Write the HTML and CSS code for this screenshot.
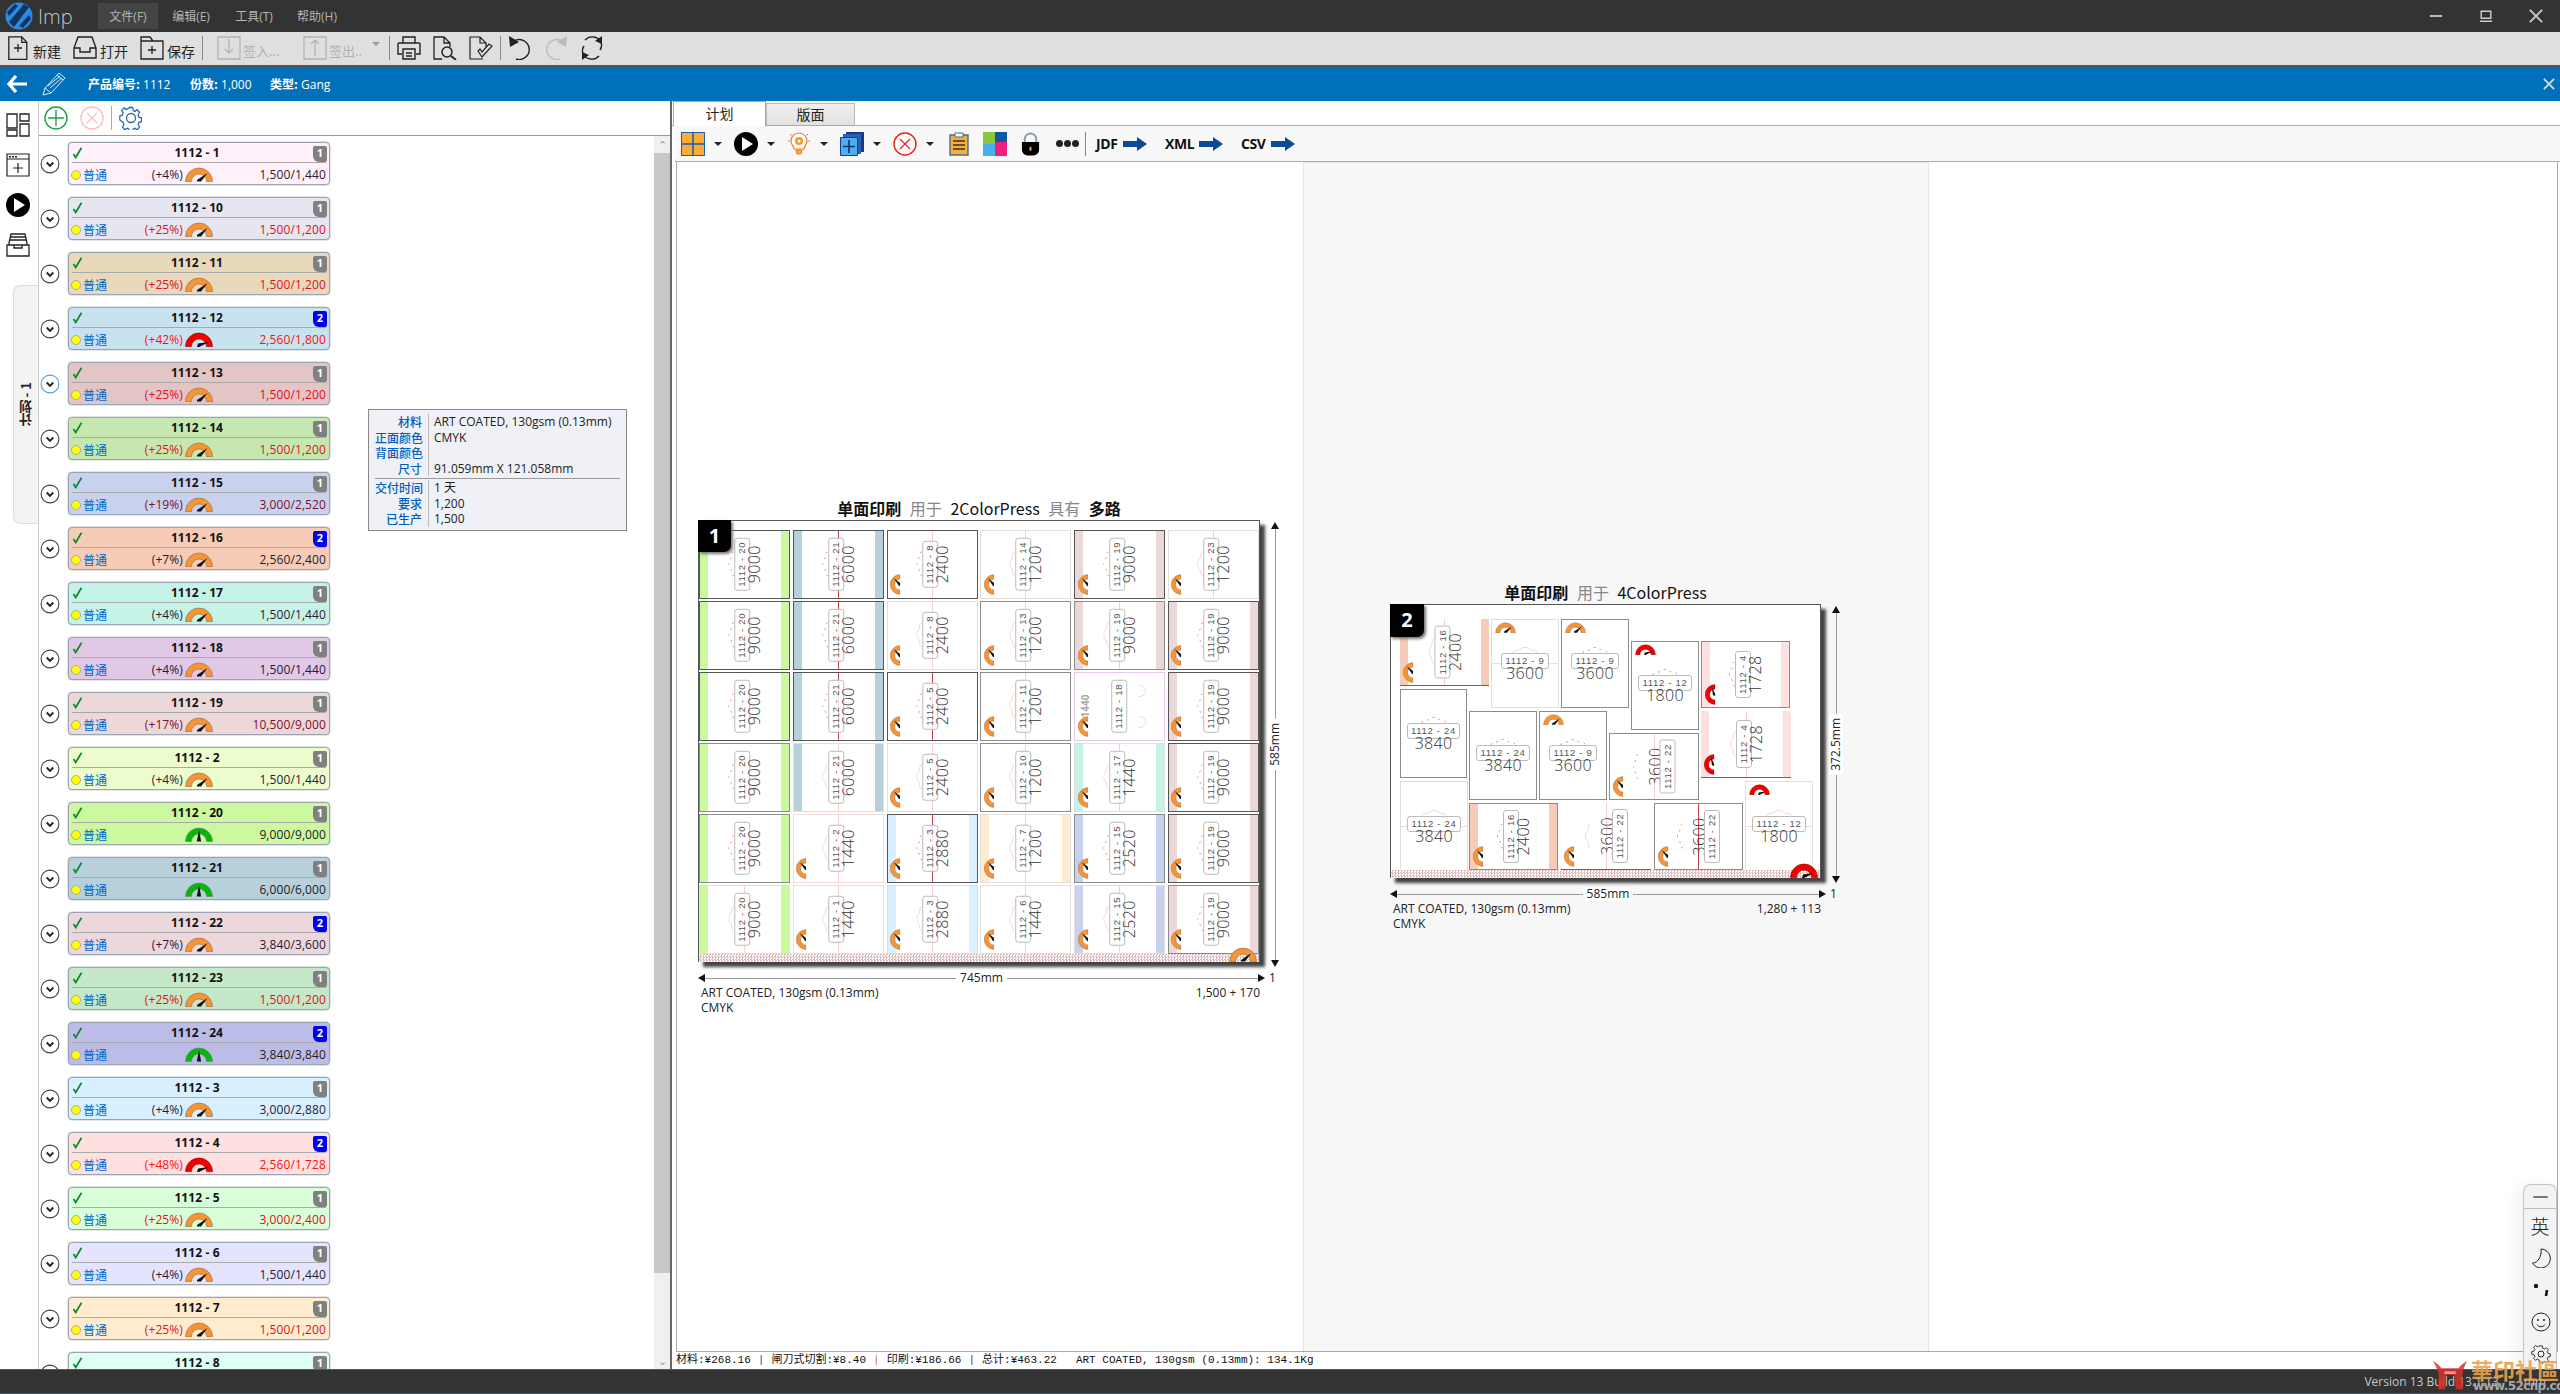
FILE: index.html
```html
<!DOCTYPE html>
<html lang="zh">
<head>
<meta charset="utf-8">
<title>Imp</title>
<link rel="stylesheet" href="styles.css">
</head>
<body>
<svg class="defs" aria-hidden="true">
<symbol id="go" viewBox="0 0 28 15"><path d="M.5 14.5a13.5 13.5 0 0 1 27 0h-6a7.5 7.5 0 0 0-15 0z" fill="#f79433" stroke="#8a6a50" stroke-width=".6"/><path d="M12 13l10.5-7-6.500 8.500h-4z" fill="#111"/></symbol>
<symbol id="gr" viewBox="0 0 28 15"><path d="M.5 14.500a13.500 13.500 0 0 1 27 0h-6a7.500 7.500 0 0 0-15 0z" fill="#f00000" stroke="#800" stroke-width=".6"/><path d="M13 11.500l11-1.500-10 5h-2z" fill="#111"/></symbol>
<symbol id="gg" viewBox="0 0 28 15"><path d="M.5 14.500a13.500 13.500 0 0 1 27 0h-6a7.500 7.500 0 0 0-15 0z" fill="#0ab40a" stroke="#686" stroke-width=".6"/><path d="M14 3l2.200 11.500h-4.400z" fill="#111"/></symbol>
<symbol id="ck" viewBox="0 0 12 12"><path d="M1.500 7l2.200 3.500L9.500 .8" fill="none" stroke="#0a8a28" stroke-width="1.700"/></symbol>
<symbol id="ch" viewBox="0 0 20 20"><circle cx="10" cy="10" r="8.900" fill="#fff" stroke="currentColor" stroke-width="1.100"/><path d="M6.700 8.500l3.300 3.300 3.300-3.300" fill="none" stroke="#222" stroke-width="1.900"/></symbol>
<symbol id="dd" viewBox="0 0 34 8"><path d="M1 8C1 4 6 5 9 4s3-3.500 8-3.500 5 2.500 8 3.500 8 0 8 4" fill="none" stroke="#e2404a" stroke-width=".9" stroke-dasharray="2.500 6"/></symbol>
<symbol id="dp" viewBox="0 0 34 8"><path d="M1 8C1 4 6 5 9 4s3-3.500 8-3.500 5 2.500 8 3.500 8 0 8 4" fill="none" stroke="#f3c0c4" stroke-width=".9"/></symbol>
<symbol id="ar" viewBox="0 0 24 14"><path d="M0 4h14V0l10 7-10 7v-4H0z" fill="#0b4a9a"/></symbol>
</svg>

<div class="app">
  <header class="titlebar">
    <svg class="logo" viewBox="0 0 30 30"><circle cx="15" cy="15" r="13.500" fill="#2c8ae2"/><path d="M5 21L20 3l5 3L10 26zM3 11l8-8 3 2-9 10z" fill="#14335e"/><path d="M15 25l10-11 2 4-8 9z" fill="#14335e"/></svg>
    <span class="appname">Imp</span>
    <nav class="menu">
      <span class="menu-item active">文件(F)</span>
      <span class="menu-item">编辑(E)</span>
      <span class="menu-item">工具(T)</span>
      <span class="menu-item">帮助(H)</span>
    </nav>
    <div class="winctl">
      <svg viewBox="0 0 16 16"><path d="M1 8h14" stroke="#ccc" stroke-width="2"/></svg>
      <svg viewBox="0 0 16 16"><path d="M2.500 2.500h11v8h-11zM1 14h14" fill="none" stroke="#ccc" stroke-width="1.600"/></svg>
      <svg viewBox="0 0 16 16"><path d="M1 1l14 14M15 1L1 15" stroke="#ccc" stroke-width="2.200"/></svg>
    </div>
  </header>

  <div class="toolbar">
    <button class="tb t-new"><svg class="ti" viewBox="0 0 24 24"><path d="M.8.8h13l5 5.500v17H.8zM13.800.8v5.500h5M10 8v8M6 12h8" fill="none" stroke="#222" stroke-width="1.300"/></svg><span>新建</span></button>
    <button class="tb"><svg class="ti" viewBox="0 0 24 24"><path d="M5 1h14l4 11v10H1V12zM1 12h6v4h10v-4h6" fill="none" stroke="#222" stroke-width="1.400"/></svg><span>打开</span></button>
    <button class="tb"><svg class="ti" viewBox="0 0 24 24"><path d="M1 1h9l3 4h10v18H1zM1 5h12M12 10v8M8 14h8" fill="none" stroke="#222" stroke-width="1.300"/></svg><span>保存</span></button>
    <i class="sep s-first"></i>
    <button class="tb off"><svg class="ti" viewBox="0 0 24 24"><path d="M1 1h22v22H1zM12 3v14M8 13l4 4 4-4" fill="none" stroke="#b4b4b4" stroke-width="1.300"/></svg><span>签入...</span></button>
    <button class="tb off wide"><svg class="ti" viewBox="0 0 24 24"><path d="M1 1h22v22H1zM12 20V4M8 8l4-4 4 4" fill="none" stroke="#b4b4b4" stroke-width="1.300"/></svg><span>签出..</span><em class="drop gray"></em></button>
    <i class="sep"></i>
    <button class="tb icon"><svg class="ti" viewBox="0 0 24 24"><path d="M6 7V1h12v6M5 18H1V8a1 1 0 0 1 1-1h20a1 1 0 0 1 1 1v10h-4M6 13h12v10H6zM9 17h6M9 20h6" fill="none" stroke="#222" stroke-width="1.400"/></svg></button>
    <button class="tb icon"><svg class="ti" viewBox="0 0 24 24"><path d="M9 23H1V1h10l6 6v4M11 1v6h6" fill="none" stroke="#222" stroke-width="1.300"/><circle cx="14" cy="16" r="5" fill="none" stroke="#222" stroke-width="1.500"/><path d="M18 20l5 4" stroke="#222" stroke-width="1.800"/></svg></button>
    <button class="tb icon"><svg class="ti" viewBox="0 0 24 24"><path d="M14 23H1V1h10l6 6v4M11 1v6h6M9 15l4 6 10-11-3-2-7 8-2-3z" fill="none" stroke="#222" stroke-width="1.200"/></svg></button>
    <i class="sep"></i>
    <button class="tb icon"><svg class="ti" viewBox="0 0 24 24"><path d="M6 5a10 10 0 1 1 2 18" fill="none" stroke="#222" stroke-width="1.400"/><path d="M1 0l1 11 9-5z" fill="#222"/></svg></button>
    <button class="tb icon"><svg class="ti" viewBox="0 0 24 24"><path d="M18 5a10 10 0 1 0-2 18" fill="none" stroke="#bbb" stroke-width="1.400"/><path d="M23 0l-1 11-9-5z" fill="#bbb"/></svg></button>
    <button class="tb icon"><svg class="ti" viewBox="0 0 24 24"><path d="M21 6a10 10 0 0 0-16-2M3 18a10 10 0 0 0 16 2M20 14a9 9 0 0 0 1-8M4 10a9 9 0 0 0-1 8" fill="none" stroke="#222" stroke-width="1.400"/><path d="M22 0v8l-7-3zM2 24v-8l7 3z" fill="#222"/></svg></button>
  </div>

  <div class="bluebar">
    <svg class="back" viewBox="0 0 20 18"><path d="M9 1L2 9l7 8M2 9h18" fill="none" stroke="#fff" stroke-width="3.200"/></svg>
    <svg class="pencil" viewBox="0 0 24 24"><path d="M1 23l2-7L17 1l6 5L9 21zM3 16l6 5M15 3l6 5M6 14L18 4M8 16L20 6" fill="none" stroke="#dfeaf5" stroke-width="1"/></svg>
    <span class="fact f1"><b>产品编号:</b> 1112</span>
    <span class="fact f2"><b>份数:</b> 1,000</span>
    <span class="fact"><b>类型:</b> Gang</span>
    <svg class="close" viewBox="0 0 14 14"><path d="M1 1l12 12M13 1L1 13" stroke="#d8dde2" stroke-width="2"/></svg>
  </div>

  <main class="main">
    <section class="left">
      <aside class="rail">
        <svg class="ri" viewBox="0 0 24 24"><path d="M1 1h10v14H1zM14 1h9v7h-9zM14 11h9v12h-9zM1 17h10v6H1z" fill="none" stroke="#222" stroke-width="1.300"/></svg>
        <svg class="ri" viewBox="0 0 24 24"><path d="M1 1h22v22H1zM1 6h22M12 10v10M7 15h10" fill="none" stroke="#222" stroke-width="1.200"/><path d="M3 3h2v1.500H3zM6 3h2v1.500H6zM9 3h2v1.500H9z" fill="#222"/></svg>
        <svg class="ri" viewBox="0 0 24 24"><circle cx="12" cy="12" r="12" fill="#000"/><path d="M8 5l11 7-11 7z" fill="#fff"/></svg>
        <svg class="ri" viewBox="0 0 24 24"><path d="M5 1h14l2 9v2H3v-2zM5 4h14M4 7h16M1 12h7v3h8v-3h7v11H1z" fill="none" stroke="#222" stroke-width="1.300"/></svg>
        <div class="railtab"><span>计划 - 1</span></div>
      </aside>
      <div class="listcol">
        <div class="subbar">
          <svg class="si" viewBox="0 0 24 24"><circle cx="12" cy="12" r="11" fill="none" stroke="#1ea24c" stroke-width="1.400"/><path d="M12 4v16M4 12h16" stroke="#1ea24c" stroke-width="1.400"/></svg>
          <svg class="si" viewBox="0 0 24 24"><circle cx="12" cy="12" r="11" fill="none" stroke="#ffbcbc" stroke-width="1.400"/><path d="M7 7l10 10M17 7L7 17" stroke="#ffbcbc" stroke-width="1.300"/></svg>
          <i class="sep tall"></i>
          <svg class="si" viewBox="0 0 24 24"><path d="M10 1h4l.8 3.200 2.200.9 2.800-1.700 2.800 2.800-1.700 2.800.9 2.200 3.200.8v4l-3.200.8-.9 2.200 1.700 2.800-2.800 2.800-2.800-1.700-2.200.9-.8 3.200h-4l-.8-3.200-2.200-.9-2.800 1.700-2.800-2.800 1.700-2.800-.9-2.200L-2 14v-4l3.200-.8.9-2.200L.4 4.200l2.800-2.800L6 3.100l2.200-.9z" transform="translate(2.400 .5) scale(.8 .95)" fill="none" stroke="#2a68b0" stroke-width="1.500"/><circle cx="12" cy="12" r="4.500" fill="none" stroke="#2a68b0" stroke-width="1.300"/></svg>
        </div>
        <div class="listwrap">
          <div class="list">
            <div class="row"><svg class="chev"><use href="#ch"/></svg><div class="card c1 lv1"><svg class="check"><use href="#ck"/></svg><div class="ct">1112 - 1</div><span class="badge">1</span><div class="cb"><i class="dot"></i><span class="tag">普通</span><span class="pct">(+4%)</span><svg class="gauge"><use href="#go"/></svg><span class="val">1,500/1,440</span></div></div></div>
            <div class="row"><svg class="chev"><use href="#ch"/></svg><div class="card c10 lv3"><svg class="check"><use href="#ck"/></svg><div class="ct">1112 - 10</div><span class="badge">1</span><div class="cb"><i class="dot"></i><span class="tag">普通</span><span class="pct">(+25%)</span><svg class="gauge"><use href="#go"/></svg><span class="val">1,500/1,200</span></div></div></div>
            <div class="row"><svg class="chev"><use href="#ch"/></svg><div class="card c11 lv3"><svg class="check"><use href="#ck"/></svg><div class="ct">1112 - 11</div><span class="badge">1</span><div class="cb"><i class="dot"></i><span class="tag">普通</span><span class="pct">(+25%)</span><svg class="gauge"><use href="#go"/></svg><span class="val">1,500/1,200</span></div></div></div>
            <div class="row"><svg class="chev"><use href="#ch"/></svg><div class="card c12 lv4"><svg class="check"><use href="#ck"/></svg><div class="ct">1112 - 12</div><span class="badge two">2</span><div class="cb"><i class="dot"></i><span class="tag">普通</span><span class="pct">(+42%)</span><svg class="gauge"><use href="#gr"/></svg><span class="val">2,560/1,800</span></div></div></div>
            <div class="row"><svg class="chev hot"><use href="#ch"/></svg><div class="card c13 lv3"><svg class="check"><use href="#ck"/></svg><div class="ct">1112 - 13</div><span class="badge">1</span><div class="cb"><i class="dot"></i><span class="tag">普通</span><span class="pct">(+25%)</span><svg class="gauge"><use href="#go"/></svg><span class="val">1,500/1,200</span></div></div></div>
            <div class="row"><svg class="chev"><use href="#ch"/></svg><div class="card c14 lv3"><svg class="check"><use href="#ck"/></svg><div class="ct">1112 - 14</div><span class="badge">1</span><div class="cb"><i class="dot"></i><span class="tag">普通</span><span class="pct">(+25%)</span><svg class="gauge"><use href="#go"/></svg><span class="val">1,500/1,200</span></div></div></div>
            <div class="row"><svg class="chev"><use href="#ch"/></svg><div class="card c15 lv2"><svg class="check"><use href="#ck"/></svg><div class="ct">1112 - 15</div><span class="badge">1</span><div class="cb"><i class="dot"></i><span class="tag">普通</span><span class="pct">(+19%)</span><svg class="gauge"><use href="#go"/></svg><span class="val">3,000/2,520</span></div></div></div>
            <div class="row"><svg class="chev"><use href="#ch"/></svg><div class="card c16 lv1"><svg class="check"><use href="#ck"/></svg><div class="ct">1112 - 16</div><span class="badge two">2</span><div class="cb"><i class="dot"></i><span class="tag">普通</span><span class="pct">(+7%)</span><svg class="gauge"><use href="#go"/></svg><span class="val">2,560/2,400</span></div></div></div>
            <div class="row"><svg class="chev"><use href="#ch"/></svg><div class="card c17 lv1"><svg class="check"><use href="#ck"/></svg><div class="ct">1112 - 17</div><span class="badge">1</span><div class="cb"><i class="dot"></i><span class="tag">普通</span><span class="pct">(+4%)</span><svg class="gauge"><use href="#go"/></svg><span class="val">1,500/1,440</span></div></div></div>
            <div class="row"><svg class="chev"><use href="#ch"/></svg><div class="card c18 lv1"><svg class="check"><use href="#ck"/></svg><div class="ct">1112 - 18</div><span class="badge">1</span><div class="cb"><i class="dot"></i><span class="tag">普通</span><span class="pct">(+4%)</span><svg class="gauge"><use href="#go"/></svg><span class="val">1,500/1,440</span></div></div></div>
            <div class="row"><svg class="chev"><use href="#ch"/></svg><div class="card c19 lv2"><svg class="check"><use href="#ck"/></svg><div class="ct">1112 - 19</div><span class="badge">1</span><div class="cb"><i class="dot"></i><span class="tag">普通</span><span class="pct">(+17%)</span><svg class="gauge"><use href="#go"/></svg><span class="val">10,500/9,000</span></div></div></div>
            <div class="row"><svg class="chev"><use href="#ch"/></svg><div class="card c2 lv1"><svg class="check"><use href="#ck"/></svg><div class="ct">1112 - 2</div><span class="badge">1</span><div class="cb"><i class="dot"></i><span class="tag">普通</span><span class="pct">(+4%)</span><svg class="gauge"><use href="#go"/></svg><span class="val">1,500/1,440</span></div></div></div>
            <div class="row"><svg class="chev"><use href="#ch"/></svg><div class="card c20 lv0"><svg class="check"><use href="#ck"/></svg><div class="ct">1112 - 20</div><span class="badge">1</span><div class="cb"><i class="dot"></i><span class="tag">普通</span><span class="pct"></span><svg class="gauge"><use href="#gg"/></svg><span class="val">9,000/9,000</span></div></div></div>
            <div class="row"><svg class="chev"><use href="#ch"/></svg><div class="card c21 lv0"><svg class="check"><use href="#ck"/></svg><div class="ct">1112 - 21</div><span class="badge">1</span><div class="cb"><i class="dot"></i><span class="tag">普通</span><span class="pct"></span><svg class="gauge"><use href="#gg"/></svg><span class="val">6,000/6,000</span></div></div></div>
            <div class="row"><svg class="chev"><use href="#ch"/></svg><div class="card c22 lv1"><svg class="check"><use href="#ck"/></svg><div class="ct">1112 - 22</div><span class="badge two">2</span><div class="cb"><i class="dot"></i><span class="tag">普通</span><span class="pct">(+7%)</span><svg class="gauge"><use href="#go"/></svg><span class="val">3,840/3,600</span></div></div></div>
            <div class="row"><svg class="chev"><use href="#ch"/></svg><div class="card c23 lv3"><svg class="check"><use href="#ck"/></svg><div class="ct">1112 - 23</div><span class="badge">1</span><div class="cb"><i class="dot"></i><span class="tag">普通</span><span class="pct">(+25%)</span><svg class="gauge"><use href="#go"/></svg><span class="val">1,500/1,200</span></div></div></div>
            <div class="row"><svg class="chev"><use href="#ch"/></svg><div class="card c24 lv0"><svg class="check"><use href="#ck"/></svg><div class="ct">1112 - 24</div><span class="badge two">2</span><div class="cb"><i class="dot"></i><span class="tag">普通</span><span class="pct"></span><svg class="gauge"><use href="#gg"/></svg><span class="val">3,840/3,840</span></div></div></div>
            <div class="row"><svg class="chev"><use href="#ch"/></svg><div class="card c3 lv1"><svg class="check"><use href="#ck"/></svg><div class="ct">1112 - 3</div><span class="badge">1</span><div class="cb"><i class="dot"></i><span class="tag">普通</span><span class="pct">(+4%)</span><svg class="gauge"><use href="#go"/></svg><span class="val">3,000/2,880</span></div></div></div>
            <div class="row"><svg class="chev"><use href="#ch"/></svg><div class="card c4 lv4"><svg class="check"><use href="#ck"/></svg><div class="ct">1112 - 4</div><span class="badge two">2</span><div class="cb"><i class="dot"></i><span class="tag">普通</span><span class="pct">(+48%)</span><svg class="gauge"><use href="#gr"/></svg><span class="val">2,560/1,728</span></div></div></div>
            <div class="row"><svg class="chev"><use href="#ch"/></svg><div class="card c5 lv3"><svg class="check"><use href="#ck"/></svg><div class="ct">1112 - 5</div><span class="badge">1</span><div class="cb"><i class="dot"></i><span class="tag">普通</span><span class="pct">(+25%)</span><svg class="gauge"><use href="#go"/></svg><span class="val">3,000/2,400</span></div></div></div>
            <div class="row"><svg class="chev"><use href="#ch"/></svg><div class="card c6 lv1"><svg class="check"><use href="#ck"/></svg><div class="ct">1112 - 6</div><span class="badge">1</span><div class="cb"><i class="dot"></i><span class="tag">普通</span><span class="pct">(+4%)</span><svg class="gauge"><use href="#go"/></svg><span class="val">1,500/1,440</span></div></div></div>
            <div class="row"><svg class="chev"><use href="#ch"/></svg><div class="card c7 lv3"><svg class="check"><use href="#ck"/></svg><div class="ct">1112 - 7</div><span class="badge">1</span><div class="cb"><i class="dot"></i><span class="tag">普通</span><span class="pct">(+25%)</span><svg class="gauge"><use href="#go"/></svg><span class="val">1,500/1,200</span></div></div></div>
            <div class="row"><svg class="chev"><use href="#ch"/></svg><div class="card c8 lv1"><svg class="check"><use href="#ck"/></svg><div class="ct">1112 - 8</div><span class="badge">1</span><div class="cb"><i class="dot"></i><span class="tag">普通</span><span class="pct">(+4%)</span><svg class="gauge"><use href="#go"/></svg><span class="val">1,500/1,440</span></div></div></div>
          </div>
          <div class="scrollbar"><span class="sarrow">⌃</span><div class="thumb"></div><div class="strack"></div><span class="sarrow">⌄</span></div>
        </div>
      </div>
      <div class="tip">
        <div class="tipsec">
          <span class="tl">材料</span><span>ART COATED, 130gsm (0.13mm)</span>
          <span class="tl">正面颜色</span><span>CMYK</span>
          <span class="tl">背面颜色</span><span></span>
          <span class="tl">尺寸</span><span>91.059mm X 121.058mm</span>
        </div>
        <div class="tipsec second">
          <span class="tl">交付时间</span><span>1 天</span>
          <span class="tl">要求</span><span>1,200</span>
          <span class="tl">已生产</span><span>1,500</span>
        </div>
      </div>
    </section>

    <section class="right">
      <div class="tabs"><span class="tab on">计划</span><span class="tab">版面</span></div>
      <div class="rbar">
        <svg class="rb g1" viewBox="0 0 24 24"><path d="M0 0h24v24H0z" fill="#f9ae3a"/><path d="M0 12h24M12 0v24" stroke="#1c5ea8" stroke-width="1.500"/><path d="M.5.5h23v23H.5z" fill="none" stroke="#1c5ea8"/></svg><em class="drop"></em>
        <svg class="rb" viewBox="0 0 24 24"><circle cx="12" cy="12" r="12"/><path d="M8 5l11 7-11 7z" fill="#fff"/></svg><em class="drop"></em>
        <svg class="rb" viewBox="0 0 24 24"><path d="M7 17c0-3-3-4-3-8a8 8 0 0 1 16 0c0 4-3 5-3 8z" fill="#fff" stroke="#ee7a2a" stroke-width="1.200"/><path d="M9 18h6l-1 4h-4z" fill="#f9ae3a" stroke="#ee7a2a"/><circle cx="12" cy="9" r="4" fill="#f59a20"/><circle cx="12" cy="9" r="1.500" fill="#fff"/><path d="M1 9h1.500M21.500 9H23M3 2l1.500 1.500M21 2l-1.500 1.500" stroke="#ee5a2a"/></svg><em class="drop"></em>
        <svg class="rb" viewBox="0 0 24 24"><path d="M6 0h18v20h-3V3H6z" fill="#1c3a8a"/><path d="M3 2h18v20h-3V5H3z" fill="#2c5fb0"/><path d="M.5 5.500h17v18H.5z" fill="#4cb0f0" stroke="#1c3a8a"/><path d="M9 8v13M3 14.500h12" stroke="#12306e" stroke-width="1.600"/></svg><em class="drop"></em>
        <svg class="rb" viewBox="0 0 24 24"><circle cx="12" cy="12" r="11" fill="#fff" stroke="#f02020" stroke-width="1.400"/><path d="M7 7l10 10M17 7L7 17" stroke="#f02020" stroke-width="1.300"/></svg><em class="drop last"></em>
        <svg class="rb clip" viewBox="0 0 20 24"><path d="M1 3h18v20H1z" fill="#f9ae3a" stroke="#4a6a90" stroke-width="1.400"/><path d="M6 1h8v4H6z" fill="#fff" stroke="#4a6a90"/><path d="M4 9h12M4 13h12M4 17h12" stroke="#333" stroke-width="1.500"/></svg>
        <svg class="rb blocks" viewBox="0 0 24 24"><path d="M0 0h12v12H0z" fill="#8cc63f"/><path d="M12 0h12v10H12z" fill="#0b5aa8"/><path d="M12 10h12v14H12z" fill="#ee1f78"/><path d="M0 12h12v12H0z" fill="#45b0ee"/></svg>
        <svg class="rb lock" viewBox="0 0 22 24"><path d="M5 11V7a6 6 0 0 1 12 0v4" fill="none" stroke="#8a9aa8" stroke-width="2"/><path d="M2 10h18v8a6 6 0 0 1-6 6H8a6 6 0 0 1-6-6z" fill="#000"/><path d="M10 15h2v4h-2z" fill="#f9ae3a"/></svg>
        <span class="dots"><i></i><i></i><i></i></span>
        <i class="sep mid"></i>
        <span class="exp e1">JDF</span><svg class="arrow"><use href="#ar"/></svg>
        <span class="exp e2">XML</span><svg class="arrow"><use href="#ar"/></svg>
        <span class="exp e3">CSV</span><svg class="arrow"><use href="#ar"/></svg>
      </div>
      <div class="canvas">
        <div class="col col-a">
          <div class="job job-a">
            <div class="jtitle"><b>单面印刷</b> <u>用于</u> 2ColorPress <u>具有</u> <b>多路</b></div>
            <i></i>
            <div class="sheet s1">
              <span class="no">1</span>
              <div class="tile c20 st b1"><div class="mk"><svg class="die"><use href="#dd"/></svg><b>1112 - 20</b><span>9000</span></div></div>
              <div class="tile c21 st b1 lr"><div class="mk"><svg class="die"><use href="#dd"/></svg><b>1112 - 21</b><span>6000</span></div></div>
              <div class="tile b1 lp"><div class="mk"><svg class="die"><use href="#dd"/></svg><b>1112 - 8</b><span>2400</span></div><svg class="gz"><use href="#go"/></svg></div>
              <div class="tile b3 lp"><div class="mk"><svg class="die"><use href="#dp"/></svg><b>1112 - 14</b><span>1200</span></div><svg class="gz"><use href="#go"/></svg></div>
              <div class="tile c19 st b1"><div class="mk"><svg class="die"><use href="#dd"/></svg><b>1112 - 19</b><span>9000</span></div><svg class="gz"><use href="#go"/></svg></div>
              <div class="tile b3 lp"><div class="mk"><svg class="die"><use href="#dp"/></svg><b>1112 - 23</b><span>1200</span></div><svg class="gz"><use href="#go"/></svg></div>

              <div class="tile c20 st b1"><div class="mk"><svg class="die"><use href="#dd"/></svg><b>1112 - 20</b><span>9000</span></div></div>
              <div class="tile c21 st b1 lr"><div class="mk"><svg class="die"><use href="#dd"/></svg><b>1112 - 21</b><span>6000</span></div></div>
              <div class="tile b3 lp"><div class="mk"><svg class="die"><use href="#dp"/></svg><b>1112 - 8</b><span>2400</span></div><svg class="gz"><use href="#go"/></svg></div>
              <div class="tile b2 lp"><div class="mk"><svg class="die"><use href="#dp"/></svg><b>1112 - 13</b><span>1200</span></div><svg class="gz"><use href="#go"/></svg></div>
              <div class="tile c19 st b2 lp"><div class="mk"><svg class="die"><use href="#dp"/></svg><b>1112 - 19</b><span>9000</span></div><svg class="gz"><use href="#go"/></svg></div>
              <div class="tile c19 st b1"><div class="mk"><svg class="die"><use href="#dd"/></svg><b>1112 - 19</b><span>9000</span></div><svg class="gz"><use href="#go"/></svg></div>

              <div class="tile c20 st b1"><div class="mk"><svg class="die"><use href="#dd"/></svg><b>1112 - 20</b><span>9000</span></div></div>
              <div class="tile c21 st b1 lr"><div class="mk"><svg class="die"><use href="#dd"/></svg><b>1112 - 21</b><span>6000</span></div></div>
              <div class="tile b1 lr"><div class="mk"><svg class="die"><use href="#dd"/></svg><b>1112 - 5</b><span>2400</span></div><svg class="gz"><use href="#go"/></svg></div>
              <div class="tile b2 lp"><div class="mk"><svg class="die"><use href="#dp"/></svg><b>1112 - 11</b><span>1200</span></div><svg class="gz"><use href="#go"/></svg></div>
              <div class="tile b4"><div class="mk solo"><b>1112 - 18</b></div><span class="side">1440</span><i class="hook h1"></i><i class="hook h2"></i><svg class="gz"><use href="#go"/></svg></div>
              <div class="tile c19 st b1"><div class="mk"><svg class="die"><use href="#dd"/></svg><b>1112 - 19</b><span>9000</span></div><svg class="gz"><use href="#go"/></svg></div>

              <div class="tile c20 st b2"><div class="mk"><svg class="die"><use href="#dd"/></svg><b>1112 - 20</b><span>9000</span></div></div>
              <div class="tile c21 st b3 lp"><div class="mk"><svg class="die"><use href="#dp"/></svg><b>1112 - 21</b><span>6000</span></div></div>
              <div class="tile b3 lp"><div class="mk"><svg class="die"><use href="#dp"/></svg><b>1112 - 5</b><span>2400</span></div><svg class="gz"><use href="#go"/></svg></div>
              <div class="tile b2 lp"><div class="mk"><svg class="die"><use href="#dp"/></svg><b>1112 - 10</b><span>1200</span></div><svg class="gz"><use href="#go"/></svg></div>
              <div class="tile c17 st b3 lp"><div class="mk"><svg class="die"><use href="#dp"/></svg><b>1112 - 17</b><span>1440</span></div><svg class="gz"><use href="#go"/></svg></div>
              <div class="tile c19 st b1"><div class="mk"><svg class="die"><use href="#dd"/></svg><b>1112 - 19</b><span>9000</span></div><svg class="gz"><use href="#go"/></svg></div>

              <div class="tile c20 st b2"><div class="mk"><svg class="die"><use href="#dd"/></svg><b>1112 - 20</b><span>9000</span></div></div>
              <div class="tile b5 lp"><div class="mk"><svg class="die"><use href="#dp"/></svg><b>1112 - 2</b><span>1440</span></div><svg class="gz"><use href="#go"/></svg></div>
              <div class="tile c3 st b1 lr"><div class="mk"><svg class="die"><use href="#dd"/></svg><b>1112 - 3</b><span>2880</span></div><svg class="gz"><use href="#go"/></svg></div>
              <div class="tile c7 st b3 lp"><div class="mk"><svg class="die"><use href="#dp"/></svg><b>1112 - 7</b><span>1200</span></div><svg class="gz"><use href="#go"/></svg></div>
              <div class="tile c15 st b2"><div class="mk"><svg class="die"><use href="#dd"/></svg><b>1112 - 15</b><span>2520</span></div><svg class="gz"><use href="#go"/></svg></div>
              <div class="tile c19 st b1"><div class="mk"><svg class="die"><use href="#dd"/></svg><b>1112 - 19</b><span>9000</span></div><svg class="gz"><use href="#go"/></svg></div>

              <div class="tile c20 st b3 lp"><div class="mk"><svg class="die"><use href="#dp"/></svg><b>1112 - 20</b><span>9000</span></div></div>
              <div class="tile b5 lp"><div class="mk"><svg class="die"><use href="#dp"/></svg><b>1112 - 1</b><span>1440</span></div><svg class="gz"><use href="#go"/></svg></div>
              <div class="tile c3 st b3 lp"><div class="mk"><svg class="die"><use href="#dp"/></svg><b>1112 - 3</b><span>2880</span></div><svg class="gz"><use href="#go"/></svg></div>
              <div class="tile b3 lp"><div class="mk"><svg class="die"><use href="#dp"/></svg><b>1112 - 6</b><span>1440</span></div><svg class="gz"><use href="#go"/></svg></div>
              <div class="tile c15 st b3 lp"><div class="mk"><svg class="die"><use href="#dp"/></svg><b>1112 - 15</b><span>2520</span></div><svg class="gz"><use href="#go"/></svg></div>
              <div class="tile c19 st b2"><div class="mk"><svg class="die"><use href="#dd"/></svg><b>1112 - 19</b><span>9000</span></div><svg class="gz"><use href="#go"/></svg></div>
              <i class="strip"></i>
              <svg class="bigg"><use href="#go"/></svg>
            </div>
            <div class="dimv"><em class="up"></em><s></s><span>585mm</span><s></s><em class="dn"></em></div>
            <div class="dimh"><em class="lf"></em><s></s><span>745mm</span><s></s><em class="rt"></em></div>
            <span class="one">1</span>
            <div class="meta"><span>ART COATED, 130gsm (0.13mm)<br>CMYK</span><span>1,500 + 170</span></div>
          </div>
        </div>
        <div class="col col-b">
          <div class="job job-b">
            <div class="jtitle"><b>单面印刷</b> <u>用于</u> 4ColorPress</div>
            <i></i>
            <div class="sheet s2">
              <span class="no">2</span>
              <div class="tile p1 c16 st b6 r lp"><div class="mk"><svg class="die"><use href="#dp"/></svg><b>1112 - 16</b><span>2400</span></div><svg class="gz"><use href="#go"/></svg></div>
              <div class="tile p2 b3 lh"><div class="mk"><svg class="die"><use href="#dp"/></svg><b>1112 - 9</b><span>3600</span></div><svg class="gt"><use href="#go"/></svg></div>
              <div class="tile p3 b2"><div class="mk"><svg class="die"><use href="#dd"/></svg><b>1112 - 9</b><span>3600</span></div><svg class="gt"><use href="#go"/></svg></div>
              <div class="tile p4 b2"><div class="mk"><svg class="die"><use href="#dd"/></svg><b>1112 - 12</b><span>1800</span></div><svg class="gt"><use href="#gr"/></svg></div>
              <div class="tile p5 c4 st b2 r"><div class="mk"><svg class="die"><use href="#dd"/></svg><b>1112 - 4</b><span>1728</span></div><svg class="gz"><use href="#gr"/></svg></div>
              <div class="tile p6 b2"><div class="mk"><svg class="die"><use href="#dd"/></svg><b>1112 - 24</b><span>3840</span></div></div>
              <div class="tile p7 b2"><div class="mk"><svg class="die"><use href="#dd"/></svg><b>1112 - 24</b><span>3840</span></div></div>
              <div class="tile p8 b2"><div class="mk"><svg class="die"><use href="#dd"/></svg><b>1112 - 9</b><span>3600</span></div><svg class="gt"><use href="#go"/></svg></div>
              <div class="tile p9 b2 r flip lp"><div class="mk"><svg class="die"><use href="#dd"/></svg><b>1112 - 22</b><span>3600</span></div><svg class="gz"><use href="#go"/></svg></div>
              <div class="tile p10 c4 st b6 r lp"><div class="mk"><svg class="die"><use href="#dp"/></svg><b>1112 - 4</b><span>1728</span></div><svg class="gz"><use href="#gr"/></svg></div>
              <div class="tile p11 b3 lh"><div class="mk"><svg class="die"><use href="#dp"/></svg><b>1112 - 24</b><span>3840</span></div></div>
              <div class="tile p12 c16 st b2 r"><div class="mk"><svg class="die"><use href="#dd"/></svg><b>1112 - 16</b><span>2400</span></div><svg class="gz"><use href="#go"/></svg></div>
              <div class="tile p13 b6 r flip lp"><div class="mk"><svg class="die"><use href="#dp"/></svg><b>1112 - 22</b><span>3600</span></div><svg class="gz"><use href="#go"/></svg></div>
              <div class="tile p14 b2 r flip lr"><div class="mk"><svg class="die"><use href="#dd"/></svg><b>1112 - 22</b><span>3600</span></div><svg class="gz"><use href="#go"/></svg></div>
              <div class="tile p15 b3 lh"><div class="mk"><svg class="die"><use href="#dp"/></svg><b>1112 - 12</b><span>1800</span></div><svg class="gt"><use href="#gr"/></svg></div>
              <i class="strip"></i>
              <svg class="bigg"><use href="#gr"/></svg>
            </div>
            <div class="dimv"><em class="up"></em><s></s><span>372.5mm</span><s></s><em class="dn"></em></div>
            <div class="dimh"><em class="lf"></em><s></s><span>585mm</span><s></s><em class="rt"></em></div>
            <span class="one">1</span>
            <div class="meta"><span>ART COATED, 130gsm (0.13mm)<br>CMYK</span><span>1,280 + 113</span></div>
          </div>
        </div>
        <div class="col col-c"></div>
      </div>
      <div class="cost"><span>材料:¥268.16</span><i class="cs a">|</i><span>闸刀式切割:¥8.40</span><i class="cs b">|</i><span>印刷:¥186.66</span><i class="cs c">|</i><span>总计:¥463.22</span><span class="costm">ART COATED, 130gsm (0.13mm): 134.1Kg</span></div>
      <div class="ime">
        <div class="imehead"><i></i></div>
        <span class="imech">英</span>
        <svg class="imei" viewBox="0 0 20 20"><path d="M10 1a9.500 9.500 0 1 1-8.500 14C7 15 11 8 10 1z" fill="none" stroke="#222" stroke-width="1"/></svg>
        <svg class="imei" viewBox="0 0 20 20"><circle cx="5" cy="6" r="2.200" fill="#111"/><path d="M16 10l-1 6" stroke="#111" stroke-width="2.600"/></svg>
        <svg class="imei" viewBox="0 0 20 20"><circle cx="10" cy="10" r="9" fill="none" stroke="#222"/><circle cx="7" cy="8" r="1" fill="#222"/><circle cx="13" cy="8" r="1" fill="#222"/><path d="M6 12.500c2 3 6 3 8 0" fill="none" stroke="#222"/></svg>
        <svg class="imei" viewBox="0 0 20 20"><circle cx="10" cy="10" r="3" fill="none" stroke="#222"/><path d="M8.500 1h3l.5 2.500 2 .9 2.200-1.300 2 2-1.300 2.200.9 2 2.500.5v3l-2.500.5-.9 2 1.300 2.200-2 2-2.200-1.300-2 .9-.5 2.500h-3L8 16.600l-2-.9-2.200 1.300-2-2 1.300-2.200-.9-2L-.3 10.300v-3l2.500-.5.9-2-1.300-2.200 2-2L6 1.900l2-.9z" transform="translate(1 1) scale(.9)" fill="none" stroke="#222"/></svg>
      </div>
    </section>
  </main>

  <footer class="status">
    <span class="ver">Version 13 Build 13.1.13</span>
    <span class="unit">mm</span>
    <svg class="wm" viewBox="0 0 38 32"><path d="M1 1c4 3 7 5 9 8h18c2-3 5-5 9-8-2 4-4 9-5 14 0 6 0 11 1 16h-8l-1-15H15l-1 15H6c1-5 1-10 1-16C6 10 3 5 1 1z" fill="#d8302c" opacity=".85"/><path d="M13 12h12v3H13z" fill="#fff" opacity=".5"/></svg>
    <span class="wmt">華印社區</span>
    <span class="wmu">www.52cnp.com</span>
  </footer>
</div>
</body>
</html>
```

FILE: styles.css
```css
*{box-sizing:border-box}
html,body{margin:0;height:100%;overflow:hidden}
body{font-family:"Open Sans","Noto Sans CJK SC",sans-serif;font-size:12px;color:#222;background:#fff}
.defs{position:absolute;width:0;height:0}
.app{display:flex;flex-direction:column;width:2560px;height:1394px}

.titlebar{flex:0 0 32px;background:#333;display:flex;align-items:center;color:#bbb;position:relative}
.logo{width:30px;height:30px;margin-left:4px}
.appname{font-size:20px;font-weight:300;color:#c4c4c4;margin-left:4px;width:28px}
.menu{display:flex;margin-left:32px;height:26px;gap:3px}
.menu-item{width:60px;display:flex;align-items:center;justify-content:center;font-size:12px;color:#b4b4b4}
.menu-item.active{background:#444}
.winctl{margin-left:auto;display:flex;gap:36px;padding-right:17px}
.winctl svg{width:14px;height:14px}

.toolbar{flex:0 0 35px;background:#dfdfdf;border-bottom:2px solid #555;display:flex;align-items:center;padding:0 0 2px 8px}
.tb{border:0;background:none;padding:0;margin:0 12px 0 0;display:flex;align-items:center;font:14px "Noto Sans CJK SC",sans-serif;color:#222;height:24px;flex:none}
.tb span{margin-left:3px;position:relative;top:3px}
.t-new span{margin-left:1px}
.tb.off{color:#b0b0b0;font-size:13px;margin-right:20px;width:66px}
.tb.off span{margin-left:2px;white-space:nowrap}
.tb.wide{margin-right:14px;width:77px}
.tb.icon{margin-right:12px}
.ti{width:24px;height:24px;flex:none}
.sep{display:block;width:1px;height:24px;background:#888;margin:0 7px 0 -5px;flex:none}
.sep.s-first{margin-right:14px}
.drop{display:inline-block;width:0;height:0;border:4px solid transparent;border-top:4px solid #222;border-bottom:0;flex:none}
.drop.gray{border-top-color:#999;margin-left:auto;margin-bottom:8px}

.bluebar{flex:0 0 34px;background:#0070bb;display:flex;align-items:center;color:#fff;font-size:12px;padding-left:7px}
.back{width:20px;height:18px}
.pencil{width:24px;height:24px;margin:0 22px 0 15px}
.fact{white-space:nowrap}
.f1{width:102px}
.f2{width:80px}
.fact b{font-weight:700;font-family:"Noto Sans CJK SC",sans-serif}
.close{width:12px;height:12px;margin-left:auto;margin-right:5px}

.main{flex:1;display:flex;min-height:0}
.left{flex:0 0 672px;display:flex;border-right:2px solid #666;position:relative;height:100%}
.rail{flex:0 0 38px;border-right:1px solid #ccc;display:flex;flex-direction:column;align-items:center;padding:12px 0 0 0;gap:16px}
.ri{width:24px;height:24px;margin-left:-3px;flex:none}
.railtab{margin:12px 0 0 13px;width:25px;height:239px;align-self:stretch;background:#f3f3f3;border:1px solid #ddd;border-right:0;border-radius:7px 0 0 7px;display:flex;align-items:center;justify-content:center}
.railtab span{writing-mode:vertical-rl;transform:rotate(180deg);font:700 13px "Noto Sans CJK SC",sans-serif;color:#222;white-space:nowrap;position:relative;left:-1px}
.listcol{flex:1;display:flex;flex-direction:column;min-width:0}
.subbar{flex:0 0 35px;border-bottom:1px solid #999;display:flex;align-items:center;padding-left:5px;gap:12px}
.si{width:24px;height:24px}
.sep.tall{margin:0 -5px 0 -5px;height:24px;background:#aaa}
.listwrap{flex:1;display:flex;min-height:0}
.list{flex:1;overflow:hidden;padding:6px 0 0 1px;display:flex;flex-direction:column;gap:12px;min-height:0}
.row{display:flex;align-items:center;flex:0 0 43px}
.chev{width:20px;height:20px;color:#444;flex:none;margin-right:8px}
.chev.hot{color:#5a9cf0}
.card{width:262px;height:43px;flex:none;border:1px solid #9aa4b2;border-radius:4px;position:relative;background:var(--c);box-shadow:0 0 0 .5px #c8ccd4}
.check{position:absolute;left:3px;top:4px;width:12px;height:12px}
.ct{height:20px;border-bottom:1px solid #aaa;margin:0 3px;text-align:center;font:700 12px/20px "Open Sans",sans-serif;color:#111;white-space:nowrap;padding-right:4px;letter-spacing:.1px}
.badge{position:absolute;right:2px;top:3px;width:14px;height:16px;background:#808080;color:#fff;font:700 11px/14px "Open Sans",sans-serif;text-align:center;border-radius:2px 2px 2px 6px}
.badge.two{background:#0000f0}
.cb{display:grid;grid-template-columns:10px 1fr auto 28px 113px;align-items:center;height:21px;padding:2px 3px 0 2px}
.dot{width:10px;height:10px;border-radius:50%;background:#ff0;border:1px solid #aaa}
.tag{font:12px "Noto Sans CJK SC",sans-serif;color:#0066cc;padding-left:2px}
.pct{font-size:12px;text-align:right;padding-right:2px;letter-spacing:.1px}
.gauge{width:28px;height:15px;margin-top:-1px}
.val{text-align:right;font-size:12px;white-space:nowrap;letter-spacing:.1px}
.lv0 .cb{color:#222}
.lv1 .cb{color:#2a1a30}
.lv2 .cb{color:#7c1030}
.lv3 .cb{color:#e01020}
.lv4 .cb{color:#ff1010}
.c1{--c:#fff0f9}.c10{--c:#e6e6f0}.c11{--c:#e8d8bc}.c12{--c:#c8e2f0}.c13{--c:#e3c5c5}.c14{--c:#c6e8b0}.c15{--c:#c8d2ee}.c16{--c:#f6ccb8}.c17{--c:#c5f3e8}.c18{--c:#e0c8e6}.c19{--c:#ecd8d8}.c2{--c:#ecfccc}.c20{--c:#ccf8a0}.c21{--c:#b8d0dc}.c22{--c:#ecd8dc}.c23{--c:#c4e8c8}.c24{--c:#bcbce8}.c3{--c:#d8f0ff}.c4{--c:#ffe0e0}.c5{--c:#d8ffd8}.c6{--c:#e4e4ff}.c7{--c:#ffecd0}.c8{--c:#e0fff4}

.scrollbar{flex:0 0 16px;background:#f0f0f0;display:flex;flex-direction:column;align-items:center;color:#999;font-size:11px;line-height:17px}
.sarrow{flex:0 0 17px;height:17px}
.thumb{flex:0 0 1120px;width:100%;background:#c8c8c8}
.strack{flex:1}

.tip{position:absolute;left:368px;top:308px;width:259px;height:122px;background:#f0f1f7;border:1px solid #888;padding:4px 6px 0 6px;font-size:12px;line-height:15.500px;color:#222}
.tipsec{display:grid;grid-template-columns:53px 1fr}
.tipsec>span:nth-child(even){padding-left:5px;border-left:1px solid #bbb;white-space:nowrap;min-height:15.500px}
.tipsec>.tl{text-align:right;color:#0060c0;padding-right:6px;font:500 12px/15.500px "Noto Sans CJK SC",sans-serif;white-space:nowrap}
.tipsec.second{border-top:1px solid #999;margin-top:2px;padding-top:1px}

.right{flex:1;min-width:0;display:flex;flex-direction:column;position:relative;height:100%}
.tabs{flex:0 0 25px;display:flex;padding-left:1px;border-bottom:1px solid #aaa;align-items:flex-end}
.tab{width:89px;height:22px;background:linear-gradient(#eee,#e2e2e2);border:1px solid #bbb;border-bottom:0;display:flex;align-items:center;justify-content:center;font:14px/18px "Noto Sans CJK SC",sans-serif;color:#222;padding-bottom:2px}
.tab.on{width:93px;height:25px;background:#fff;margin-bottom:-1px;border-color:#aaa;position:relative}
.rbar{flex:0 0 36px;background:#f8f8f8;border-bottom:1px solid #aaa;display:flex;align-items:center;padding-left:6px;margin-left:3px}
.rb{width:24px;height:24px;fill:#000;flex:none}
.rbar .drop{margin:0 12px 0 9px}
.rbar .drop.last{margin-right:15px}
.rb.clip{width:20px;margin-right:14px}
.rb.blocks{margin-right:13px}
.rb.lock{width:21px;margin-right:15px}
.dots{display:flex;gap:1px}
.dots i{width:7px;height:7px;border-radius:50%;background:#222}
.sep.mid{margin:0 10px 0 6px}
.exp{font:700 14px "Open Sans",sans-serif;color:#111;letter-spacing:-.4px;flex:none;white-space:nowrap}
.e1{width:27px}
.e2{width:34px;margin-left:18px}
.e3{width:30px;margin-left:18px}
.arrow{width:24px;height:14px;flex:none}

.canvas{flex:1;display:flex;min-height:0;margin-left:4px;border-left:1px solid #aaa;border-right:1px solid #aaa;border-bottom:1px solid #aaa;margin-right:2px}
.col{position:relative;min-width:0}
.col-a{flex:0 0 626px;background:#fff;padding:335px 0 0 21px}
.col-b{flex:0 0 626px;background:#f7f7f7;border:1px solid #e6e6e6;border-bottom:0;padding:418px 0 0 86px}
.col-c{flex:1;background:#fff}
.job{display:grid;font-size:12px;color:#222}
.job-a{grid-template-columns:562px 30px}
.job-b{grid-template-columns:431px 30px}
.jtitle{text-align:center;font:16px/22px "Noto Sans CJK SC","Open Sans",sans-serif;color:#111;white-space:nowrap;padding-bottom:1px}
.jtitle b{font-weight:700}
.jtitle u{text-decoration:none;color:#888;margin:0 5px}
.sheet{position:relative;background:#fff;border:1px solid #555;border-bottom:0;box-shadow:5px 5px 3px #444}
.s1{width:562px;height:442px;display:grid;grid-template-columns:repeat(6,91px);grid-auto-rows:68.500px;column-gap:2.800px;row-gap:2.500px;padding:9px 0 0 0;align-content:start}
.s2{width:431px;height:274px}
.no{position:absolute;z-index:3;left:-1px;top:-1px;width:33px;height:32px;background:#000;color:#fff;font:700 20px/32px "Open Sans",sans-serif;text-align:center;border-radius:0 0 7px 0;box-shadow:2px 2px 3px #777}
.s2 .no{width:34px;height:33px}
.strip{position:absolute;left:0;right:0;bottom:0;height:8px;background:repeating-conic-gradient(#dcbcbc 0 25%,#fff 0 50%) 0 0/3px 3px}
.bigg{position:absolute;right:2px;bottom:0;width:28px;height:15px;z-index:2}

.tile{position:relative;background:#fff;overflow:hidden}
.b1{border:1px solid #555}
.b2{border:1px solid #8c8c8c}
.b3{border:1px solid #e2dfdb}
.b4{border:1px solid #e5cdea}
.b5{border:1px solid #f5dcd8}
.b6{border:0;border-bottom:1px solid #666}
.st::before,.st::after{content:"";position:absolute;top:0;bottom:0;width:8px;background:var(--c)}
.st::before{left:0}
.st::after{right:0}
.tile.lp{background:linear-gradient(#f7cdd0,#f7cdd0) center/1px 100% no-repeat #fff}
.tile.lr{background:linear-gradient(#c04048,#c04048) center/1px 100% no-repeat #fff}
.tile.lh{background:linear-gradient(#f7d8da,#f7d8da) center 50%/100% 1px no-repeat #fff}
.mk{position:absolute;inset:0;display:flex;flex-direction:column;align-items:center;justify-content:center;z-index:1}
.s1 .mk,.r .mk{transform:rotate(-90deg)}
.s1 .mk{left:12px;right:12px;top:-11px;bottom:-11px}
.r .mk{left:11px;right:11px;top:-11px;bottom:-11px}
.mk .die{width:28px;height:6px;flex:none}
.mk b{display:block;min-width:37px;padding:0 3px;height:16px;border:1px solid #bbb;border-radius:3px;background:rgba(255,255,255,.85);font:400 9.500px/14px "Liberation Sans",sans-serif;letter-spacing:.7px;color:#555;text-align:center;white-space:nowrap;flex:none}
.mk span{font:300 16px/13px "Open Sans",sans-serif;color:#333;margin-top:-2px;flex:none;letter-spacing:.3px}
.flip .die{order:-2;margin-bottom:10px}
.flip .mk span{order:-1;margin:0 0 -2px}
.solo{padding:0}
.side{position:absolute;left:-1px;top:27px;font:700 10px/12px "Open Sans",sans-serif;color:#aaa;transform:rotate(-90deg)}
.hook{position:absolute;right:16px;width:12px;height:8px;border:1px solid #f5dde0;border-top:0;border-radius:0 0 7px 7px;transform:rotate(-90deg)}
.h1{top:14px}
.h2{bottom:14px}
.gz{position:absolute;left:-3.500px;bottom:7.500px;width:22px;height:11px;transform:rotate(-90deg);z-index:2}
.gt{position:absolute;left:3px;top:2px;width:21px;height:11px;z-index:2}
.p1,.p2,.p3,.p4,.p5,.p6,.p7,.p8,.p9,.p10,.p11,.p12,.p13,.p14,.p15{position:absolute}
.p1{left:9px;top:14px;width:89px;height:67px}
.p2{left:100px;top:14px;width:68px;height:89px}
.p3{left:170px;top:14px;width:68px;height:89px}
.p4{left:240px;top:36px;width:68px;height:89px}
.p5{left:310px;top:36px;width:89px;height:67px}
.p6{left:9px;top:84px;width:67px;height:89px}
.p7{left:78px;top:106px;width:68px;height:89px}
.p8{left:148px;top:106px;width:68px;height:89px}
.p9{left:218px;top:128px;width:90px;height:67px}
.p10{left:310px;top:106px;width:90px;height:67px}
.p11{left:9px;top:176px;width:68px;height:90px}
.p12{left:78px;top:198px;width:89px;height:67px}
.p13{left:170px;top:198px;width:90px;height:67px}
.p14{left:263px;top:198px;width:89px;height:67px}
.p15{left:354px;top:176px;width:68px;height:90px}

.dimv{display:flex;flex-direction:column;align-items:center;width:10px;margin:2px 0 -5px 10px}
.dimv s,.dimh s{flex:1;background:#999;display:block}
.dimv s{width:1px}
.dimh s{height:1px}
.dimv span{writing-mode:vertical-rl;transform:rotate(180deg);background:#fff;padding:4px 1px;font-size:12px;border-radius:3px;line-height:12px;white-space:nowrap}
.dimh{display:flex;align-items:center;height:14px;margin:9px -5px 0 0}
.dimh span{background:#fff;padding:0 4px;border-radius:3px;font-size:12px;line-height:14px}
.up,.dn,.lf,.rt{display:block;width:0;height:0;border:4px solid transparent;flex:none}
.up{border-top:0;border-bottom:7px solid #111}
.dn{border-bottom:0;border-top:7px solid #111}
.lf{border-left:0;border-right:7px solid #111}
.rt{border-right:0;border-left:7px solid #111}
.one{font-size:12px;line-height:14px;margin:9px 0 0 9px}
.meta{display:flex;justify-content:space-between;padding:0 0 0 3px;line-height:15px;font-size:12px;width:100%;grid-column:1}

.cost{flex:0 0 17px;padding-left:4px;font:11px/17px "Liberation Mono","Noto Sans CJK SC",monospace;color:#111;white-space:nowrap;display:flex}
.cs{font-style:normal;margin:0 7px}
.cs.a{color:#2050c0}.cs.b{color:#d08000}.cs.c{color:#8020a0}
.costm{margin-left:19px}

.ime{position:absolute;right:3px;top:1083px;bottom:0;width:34px;background:#f3f3f3;border:1px solid #c4c4c4;border-bottom:0;border-radius:8px 8px 0 0;display:flex;flex-direction:column;align-items:center;box-shadow:-6px 0 14px rgba(0,0,0,.05);overflow:hidden}
.imehead{flex:0 0 24px;width:100%;border-bottom:1px solid #bbb;display:flex;align-items:center;justify-content:center}
.imehead i{width:15px;height:2px;background:#777;border-radius:1px}
.imech{font:300 19px/22px "Noto Sans CJK SC",sans-serif;color:#222;margin:6px 0 5px}
.imei{width:20px;height:20px;margin:6px 0 6px 1px;flex:none}

.status{flex:0 0 25px;background:#333;border-top:1px solid #555;border-bottom:1px solid #2f5f68;display:flex;align-items:center;justify-content:flex-end;color:#c8c8c8;position:relative;z-index:5;font-size:12px;padding-right:14px}
.unit{margin-left:25px}
.wm{position:absolute;left:2432px;top:-11px;width:36px;height:32px}
.wmt{position:absolute;left:2471px;top:-14px;font:700 22px/26px "Noto Sans CJK TC",serif;color:#e8a24e;white-space:nowrap;opacity:.9}
.wmu{position:absolute;left:2473px;top:9px;font:700 12px/14px "DejaVu Sans",sans-serif;color:#a8a8a8;letter-spacing:-.6px}
```
